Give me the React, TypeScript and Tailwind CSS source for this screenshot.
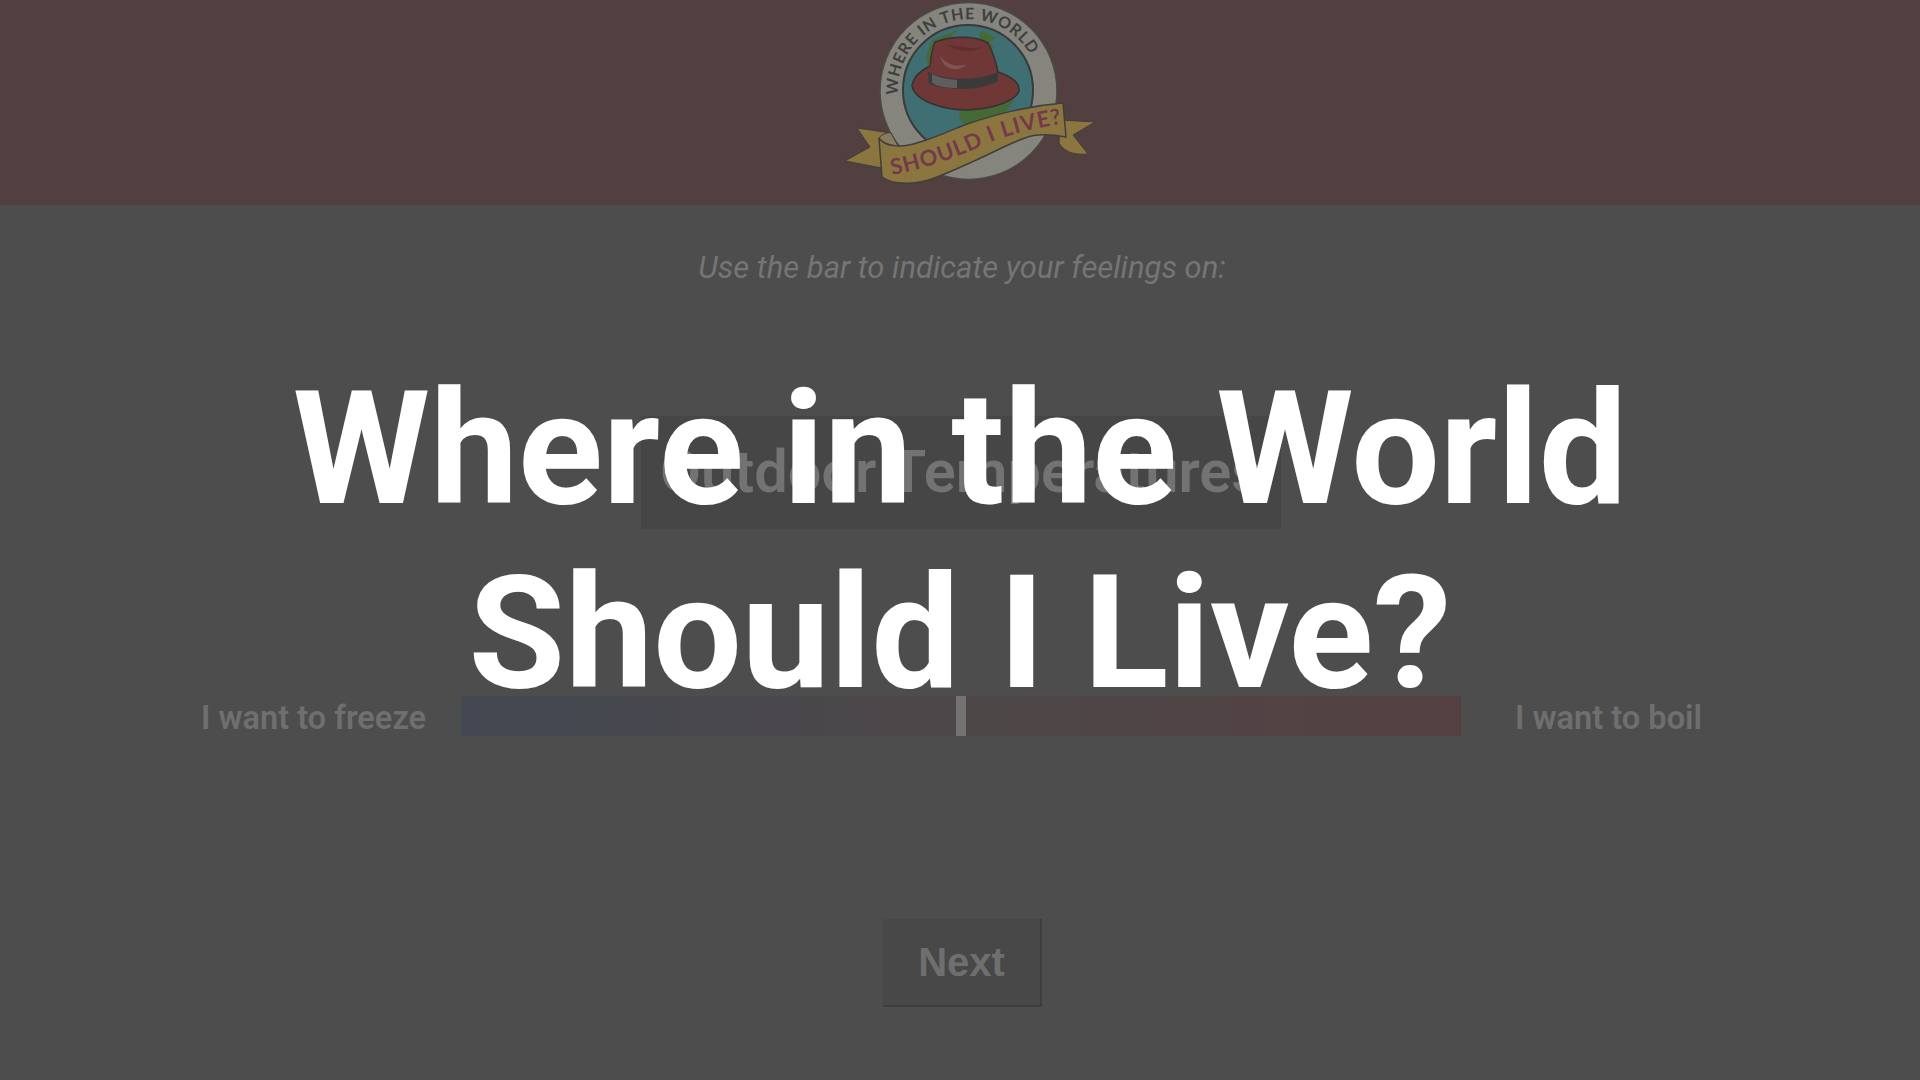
import { useState } from 'react'

function Logo() {
  return (
    <svg viewBox="0 0 280 210" className="h-[210px] w-[280px] shrink-0" aria-label="Where in the World Should I Live? logo">
      <defs>
        <path id="ringText" d="M 78 95 A 71 71 0 0 1 211 56" fill="none" />
        <path id="ribbonText" d="M 72 175 C 100 170, 130 160, 157 148 C 180 137, 205 130, 240 124" fill="none" />
        <clipPath id="globe">
          <circle cx="148" cy="90" r="65" />
        </clipPath>
      </defs>
      <circle cx="148.5" cy="91" r="88.5" fill="#85857d" stroke="#4a4a48" strokeWidth="1.5" />
      <circle cx="148" cy="90" r="65" fill="#3f6f72" stroke="#3a3a3a" strokeWidth="2" />
      <g clipPath="url(#globe)" fill="#466a36">
        <path d="M 106 56 L 112 40 L 138 30 L 132 36 L 120 42 L 116 62 L 108 66 Z" />
        <path d="M 158 34 L 163 31 L 176 38 L 170 42 L 174 48 L 166 50 Z" />
        <path d="M 139 112 L 195 100 L 185 112 L 170 122 L 148 126 L 140 120 Z" />
      </g>
      <text className="font-bold" fontFamily="Lato, sans-serif" fontSize="16" fill="#3f3f3f">
        <textPath href="#ringText" textLength="190" lengthAdjust="spacing">WHERE IN THE WORLD</textPath>
      </text>

      <path d="M 92 86 C 93 76, 102 70, 110 66 C 111 56, 113 46, 115 42 C 130 36, 155 35, 168 43 C 173 52, 176 62, 178 72 C 190 76, 200 82, 199 91 C 196 100, 175 109, 148 110 C 120 110, 95 100, 92 86 Z" fill="#6f3735" stroke="#333" strokeWidth="1.5" />
      <path d="M 120 56 C 126 64, 136 68, 147 64 C 140 72, 124 72, 120 56 Z" fill="#805453" />
      <path d="M 127 45 C 140 46, 150 50, 163 47 C 153 53, 138 52, 127 45 Z" fill="#5f2f2e" />
      <path d="M 108 72 C 125 80, 155 82, 178 72 L 178 81 C 160 92, 125 90, 109 84 Z" fill="#3a3a3a" />
      <path d="M 112 74 C 120 78, 128 79, 137 80 L 137 88 C 128 88, 118 87, 112 83 Z" fill="#5e5e5e" />

      <path d="M 37 128 L 71 133 L 62 168 L 25 161 L 50 147 Z" fill="#8c7640" stroke="#3f3f3f" strokeWidth="1" />
      <path d="M 240 120 L 275 122 L 253 135 L 268 154 C 255 155, 245 153, 239 143 Z" fill="#8c7640" stroke="#3f3f3f" strokeWidth="1" />
      <path d="M 59 138 C 62 134, 68 132, 71 133 L 78 146 L 62 158 Z" fill="#8a7a5e" stroke="#3f3f3f" strokeWidth="1" />
      <path d="M 59 138 C 64 146, 80 149, 100 142 C 120 136, 135 128, 150 123 C 175 115, 205 106, 243 103 L 246 137 C 230 134, 215 134, 205 138 C 195 141, 180 149, 167 155 C 150 163, 135 170, 117 177 C 105 182, 95 184, 83 183 C 75 183, 68 181, 62 177 Z" fill="#8c7640" stroke="#3f3f3f" strokeWidth="1.5" />
      <text className="font-bold" fontFamily="Lato, sans-serif" fontSize="22" fill="#74394a">
        <textPath href="#ribbonText" textLength="178" lengthAdjust="spacing">SHOULD I LIVE?</textPath>
      </text>
    </svg>
  )
}

export default function App() {
  const [value] = useState(50)

  return (
    <div className="relative flex h-[1080px] w-full flex-col overflow-hidden bg-[#4d4d4d] font-['Roboto',sans-serif]">
      <header className="flex h-[205px] shrink-0 justify-center bg-[#523f40]">
        <Logo />
      </header>

      <main className="flex flex-1 flex-col items-center">
        <p className="mt-[45px] ml-[4px] text-[31px] leading-[36px] text-[#757575] italic">
          Use the bar to indicate your feelings on:
        </p>

        <h2 className="mt-[130px] ml-[2px] flex h-[113px] w-[640px] items-center justify-center bg-[#464646] text-[59.5px] font-semibold whitespace-nowrap text-[#737373]">
          Outdoor Temperatures
        </h2>

        <div className="mt-[165px] flex w-full items-center justify-center">
          <span className="w-[226px] pt-[4px] text-[32.6px] leading-[40px] font-semibold whitespace-nowrap text-[#6f6f6f]">
            I want to freeze
          </span>
          <div className="relative ml-[34px] h-[40px] w-[1000px] bg-[linear-gradient(to_right,#434852,#4d4748_50%,#544042)]">
            <div
              className="absolute top-0 h-full w-[10px] -translate-x-1/2 bg-[#737373]"
              style={{ left: `${value}%` }}
            />
          </div>
          <span className="ml-[54px] w-[204px] pt-[4px] text-[32.6px] leading-[40px] font-semibold whitespace-nowrap text-[#6f6f6f]">
            I want to boil
          </span>
        </div>

        <button className="mt-[181px] ml-[5px] h-[88px] w-[159px] border-r-2 border-b-2 border-[#3e3e3e] bg-[#484848] font-['Liberation_Sans',sans-serif] text-[40px] font-bold text-[#6f6f6f]">
          Next
        </button>
      </main>

      <div className="absolute inset-0 flex items-center justify-center">
        <h1 className="mt-[2px] text-center text-[157px] leading-[184px] font-bold text-white">
          Where in the World
          <br />
          Should I Live?
        </h1>
      </div>
    </div>
  )
}
